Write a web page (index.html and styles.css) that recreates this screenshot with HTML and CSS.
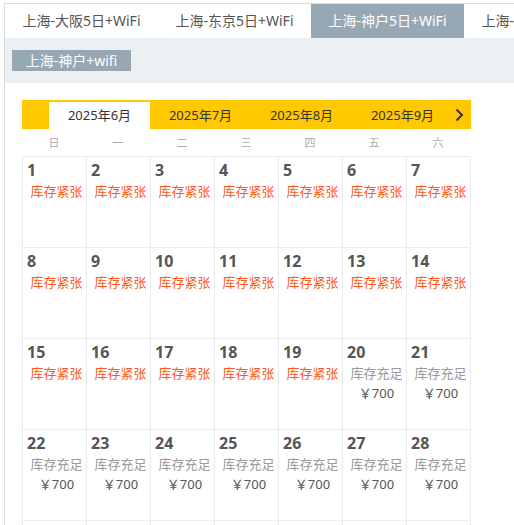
FILE: index.html
```html
<!DOCTYPE html>
<html lang="zh-CN">

<head>
  <meta charset="UTF-8">
  <meta name="viewport" content="width=device-width, initial-scale=1">
  <title>上海-神户5日+WiFi</title>
  <link rel="stylesheet" href="styles.css">
</head>

<body>

  <div class="box">
    <ul class="tabs">
      <li>上海-大阪5日+WiFi</li>
      <li>上海-东京5日+WiFi</li>
      <li class="active">上海-神户5日+WiFi</li>
      <li>上海-京都5日+WiFi</li>
    </ul>

    <div class="subtabs">
      <span class="subtab">上海-神户+wifi</span>
    </div>

    <div class="calendar">
      <div class="months">
        <span class="month active">2025年6月</span>
        <span class="month">2025年7月</span>
        <span class="month">2025年8月</span>
        <span class="month">2025年9月</span>
        <span class="next">
          <svg width="9" height="14" viewBox="0 0 9 14"><path d="M1.5 1.5 L7 7 L1.5 12.5" fill="none" stroke="#333" stroke-width="2"/></svg>
        </span>
      </div>

      <div class="week">
        <span>日</span><span>一</span><span>二</span><span>三</span><span>四</span><span>五</span><span>六</span>
      </div>

      <div class="days" id="days"></div>
    </div>
  </div>

  <script>
    const days = document.getElementById('days');
    for (let d = 1; d <= 35; d++) {
      const cell = document.createElement('div');
      cell.className = 'day';
      if (d > 30) {
        cell.innerHTML = '';
      } else if (d < 20) {
        cell.innerHTML = `<b>${d}</b><p class="low">库存紧张</p>`;
      } else {
        cell.innerHTML = `<b>${d}</b><p class="ok">库存充足</p><p class="price">￥700</p>`;
      }
      days.appendChild(cell);
    }
  </script>

</body>

</html>
```

FILE: styles.css
```css
body {
  font-family: 'Noto Sans', 'Noto Sans CJK SC', sans-serif;
  margin: 3px 0 0 4px;
  overflow: hidden;
  background: #fff;
}

.box {
  width: 700px;
  border: 1px solid #d6dee6;
  border-bottom: none;
}

/* Tabs */
.tabs {
  display: flex;
  list-style: none;
  margin: 0;
  padding: 0;
}

.tabs li {
  flex: 0 0 153px;
  height: 34px;
  line-height: 34px;
  text-align: center;
  font-size: 14px;
  color: #555;
  white-space: nowrap;
}

.tabs li.active {
  background-color: #97a8b5;
  color: #fff;
}

.subtabs {
  background-color: #edf0f3;
  padding: 12px 7px;
  display: flex;
}

.subtab {
  background-color: #97a8b5;
  color: #fff;
  font-size: 14px;
  width: 119px;
  height: 21px;
  line-height: 21px;
  text-align: center;
}

/* Calendar */
.calendar {
  width: 449px;
  margin: 17px 0 0 17px;
}

.months {
  background-color: #ffc800;
  height: 29px;
  padding-left: 27px;
  display: flex;
  align-items: flex-end;
}

.month {
  width: 101px;
  height: 27px;
  line-height: 27px;
  text-align: center;
  font-size: 13px;
  color: #333;
}

.month.active {
  background-color: #fff;
}

.next {
  align-self: center;
  margin-left: 2px;
  display: flex;
}

.week {
  display: grid;
  grid-template-columns: repeat(7, 64px);
  height: 27px;
  line-height: 27px;
  font-size: 11px;
  color: #aaa;
  text-align: center;
}

.days {
  display: grid;
  grid-template-columns: repeat(7, 64px);
  border-right: 1px solid #ebebeb;
  width: 448px;
}

.day {
  height: 91px;
  box-sizing: border-box;
  border-left: 1px solid #ebebeb;
  border-top: 1px solid #ebebeb;
  padding: 3px 0 0 4px;
}

.day b {
  display: block;
  font-size: 16px;
  line-height: 21px;
  color: #555;
}

.day p {
  margin: 0;
  text-align: center;
  font-size: 13px;
  line-height: 20px;
}

.low {
  color: #ff5a1e;
}

.ok {
  color: #999;
}

.price {
  color: #555;
}
```
